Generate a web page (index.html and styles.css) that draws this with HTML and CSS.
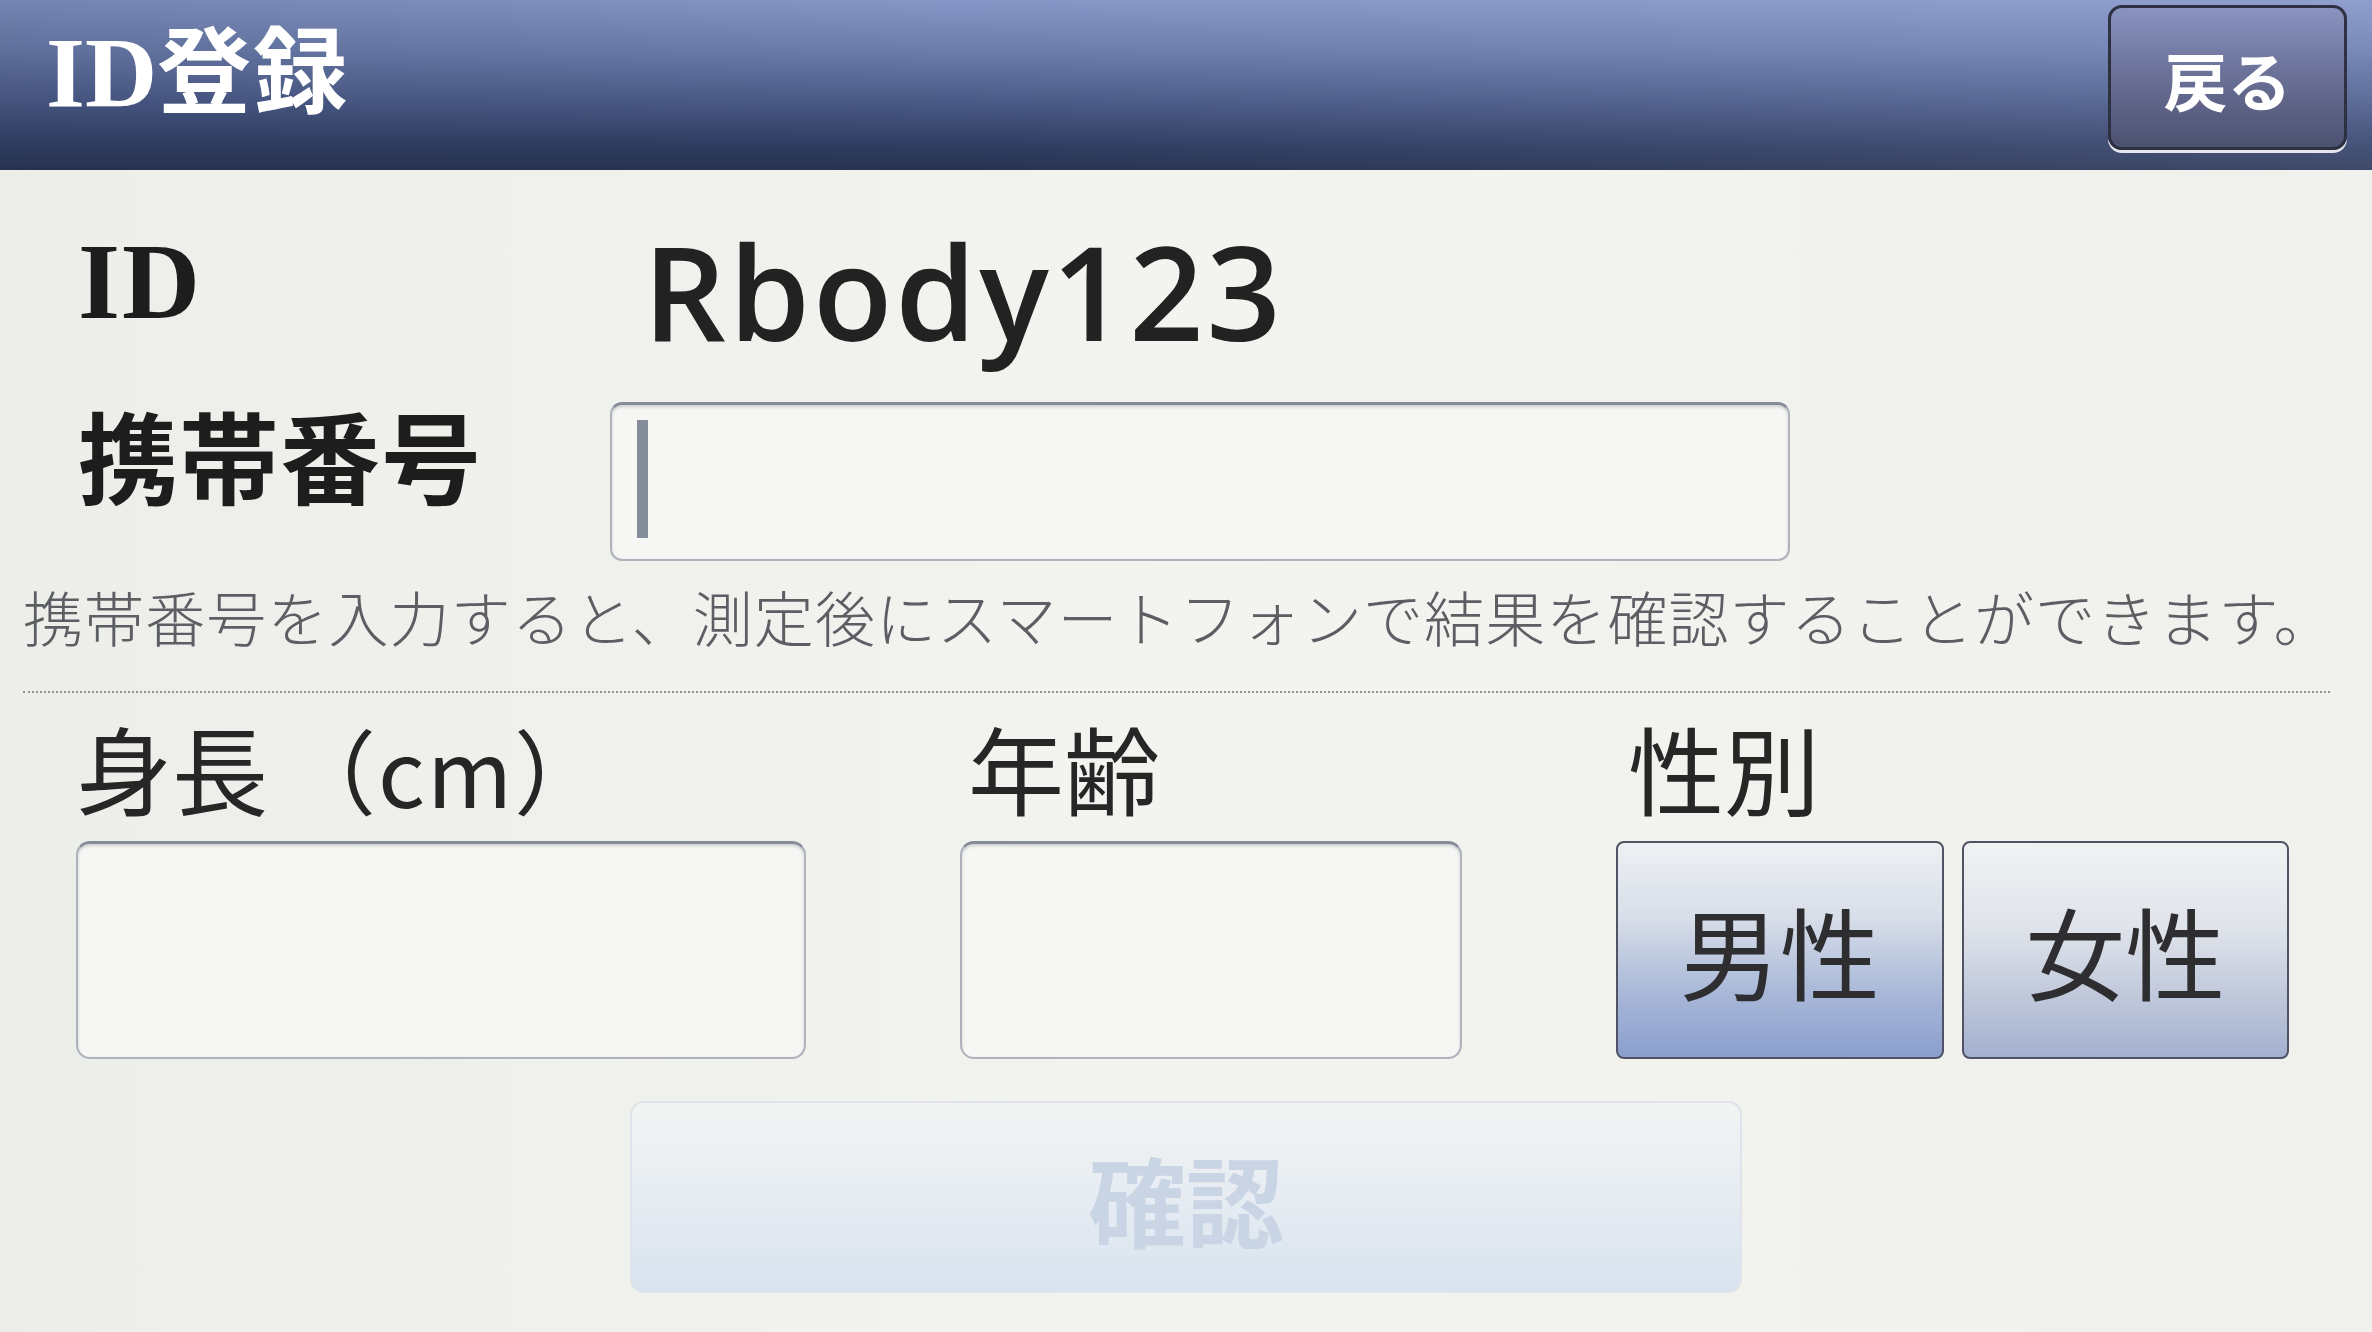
FILE: index.html
```html
<!DOCTYPE html>
<html lang="ja">
<head>
<meta charset="utf-8">
<title>ID登録</title>
<link rel="stylesheet" href="styles.css">
</head>
<body>
<header class="topbar">
  <h1 class="title"><span class="latin">ID</span>登録</h1>
  <button class="back">戻る</button>
</header>
<main class="content">
  <div class="row row-id">
    <div class="label label-id">ID</div>
    <div class="id-value">Rbody123</div>
  </div>
  <div class="row row-phone">
    <div class="label label-phone">携帯番号</div>
    <div class="field field-phone"><span class="caret"></span></div>
  </div>
  <p class="hint">携帯番号を入力すると、測定後にスマートフォンで結果を確認することができます。</p>
  <div class="divider"></div>
  <div class="grid">
    <div class="col col-height">
      <div class="sublabel">身長<span class="unit">（cm）</span></div>
      <div class="field field-tall"></div>
    </div>
    <div class="col col-age">
      <div class="sublabel indent">年齢</div>
      <div class="field field-tall"></div>
    </div>
    <div class="col col-sex">
      <div class="sublabel indent2">性別</div>
      <div class="choices">
        <button class="choice male">男性</button>
        <button class="choice female">女性</button>
      </div>
    </div>
  </div>
  <div class="actions">
    <button class="confirm" disabled>確認</button>
  </div>
</main>
</body>
</html>
```
FILE: styles.css
```css
* { box-sizing: border-box; }
html, body { margin: 0; padding: 0; }
body {
  width: 2372px;
  height: 1332px;
  overflow: hidden;
  background: linear-gradient(to right, #eceee9 0%, #f3f4f0 50%, #f0f1ec 100%);
  font-family: "Noto Sans CJK JP", "Noto Sans", sans-serif;
  color: #222;
}

.topbar {
  height: 170px;
  display: flex;
  justify-content: space-between;
  align-items: flex-start;
  padding: 0 25px 0 46px;
  background:
    linear-gradient(to right, rgba(40,50,80,0.18) 0%, rgba(255,255,255,0) 40%, rgba(200,210,255,0.15) 100%),
    linear-gradient(to bottom, #8696c6 0%, #6b7cab 30%, #4a5a86 60%, #2f3d62 85%, #26324f 100%);
}
.title {
  margin: 0;
  padding-top: 4px;
  font-size: 94px;
  line-height: 1.3;
  font-weight: 700;
  color: #ffffff;
  letter-spacing: 2px;
  white-space: nowrap;
}
.title .latin {
  font-family: "Liberation Serif", serif;
  font-size: 100px;
  letter-spacing: 0;
}
.back {
  margin-top: 5px;
  width: 239px;
  height: 145px;
  border: 3px solid #2e3142;
  border-radius: 14px;
  box-shadow: 0 3px 0 #e6e7ee;
  background: linear-gradient(to bottom, #8a94c0 0%, #6c739a 45%, #4d5170 100%);
  color: #ffffff;
  font-family: "Noto Sans CJK JP", sans-serif;
  font-size: 64px;
  font-weight: 700;
  line-height: 1;
  padding: 0;
}

.content {
  padding: 56px 42px 0 23px;
}
.row {
  display: flex;
  align-items: flex-start;
  padding-left: 55px;
}
.label {
  width: 532px;
  flex: none;
  color: #1d1d1d;
}
.label-id {
  margin-top: 6px;
  font-family: "Liberation Serif", serif;
  font-weight: 700;
  font-size: 108px;
  line-height: 100px;
  letter-spacing: 2px;
}
.id-value {
  padding-left: 33px;
  font-family: "Open Sans", "Noto Sans", sans-serif;
  font-weight: 600;
  font-size: 130px;
  line-height: 130px;
  letter-spacing: 3px;
  color: #222;
}
.row-phone {
  margin-top: 46px;
}
.label-phone {
  margin-top: 2px;
  font-size: 100px;
  line-height: 1;
  font-weight: 700;
  letter-spacing: 1px;
}
.field {
  background: #f6f7f4;
  border: 2px solid #aeb2bd;
  border-top: 3px solid #868b99;
  border-radius: 12px;
  box-shadow: inset 0 2px 3px rgba(90,95,110,0.25);
}
.field-phone {
  width: 1180px;
  height: 159px;
  padding: 15px 0 0 25px;
}
.caret {
  display: block;
  width: 11px;
  height: 118px;
  background: #858d9b;
}
.hint {
  margin: 25px 0 0 0;
  font-size: 60px;
  line-height: 1;
  font-weight: 300;
  letter-spacing: 1.1px;
  color: #5c5e63;
  white-space: nowrap;
}
.divider {
  margin-top: 45px;
  height: 0;
  border-top: 2px dotted #909296;
}
.grid {
  margin-top: 26px;
  padding-left: 53px;
  display: grid;
  grid-template-columns: 730px 502px 673px;
  column-gap: 154px;
}
.col {
  display: flex;
  flex-direction: column;
}
.sublabel {
  font-size: 96px;
  line-height: 1;
  font-weight: 400;
  color: #262626;
  margin-bottom: 26px;
  white-space: nowrap;
}
.sublabel .unit {
  font-size: 92px;
  margin-left: 16px;
  letter-spacing: 2px;
}
.indent { padding-left: 8px; }
.indent2 { padding-left: 12px; }
.field-tall {
  height: 218px;
  border-radius: 14px;
  border-top-width: 3px;
}
.choices {
  display: flex;
  gap: 18px;
}
.choice {
  width: 328px;
  height: 218px;
  border: 2px solid #4f5364;
  border-radius: 8px;
  padding: 0;
  font-family: "Noto Sans CJK JP", sans-serif;
  font-size: 100px;
  line-height: 1;
  font-weight: 400;
  color: #2e2e30;
}
.male {
  background: linear-gradient(to bottom, #eef0f3 0%, #d8dee9 35%, #a9b8d8 70%, #8a9fce 100%);
}
.female {
  background: linear-gradient(to bottom, #f1f2f4 0%, #dfe3ea 40%, #bcc5d9 75%, #a3b0cf 100%);
}
.actions {
  margin-top: 42px;
  display: flex;
  justify-content: center;
  padding-left: 19px;
}
.confirm {
  width: 1112px;
  height: 192px;
  border: 2px solid #dfe4ea;
  border-radius: 14px;
  padding: 0;
  background: linear-gradient(to bottom, #f2f4f3 0%, #e6ecf2 50%, #d9e3ef 100%);
  font-family: "Noto Sans CJK JP", sans-serif;
  font-size: 98px;
  font-weight: 700;
  line-height: 1;
  color: #c9d4e4;
}
```
